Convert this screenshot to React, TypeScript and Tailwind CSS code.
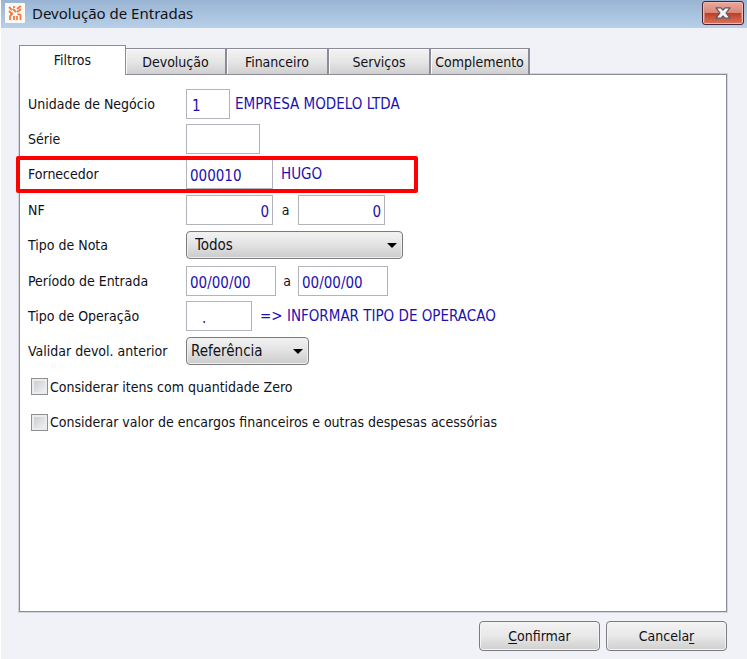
import React from 'react';

const tabs = [
  { name: "Filtros", width: "w-[107px]" },
  { name: "Devolução", width: "w-[101px]" },
  { name: "Financeiro", width: "w-[102px]" },
  { name: "Serviços", width: "w-[102px]" },
  { name: "Complemento", width: "w-[99px]" },
];

const inputClass = "h-[30px] border border-[#b2b3bd] bg-white px-[3px] pt-1 text-[15px] text-[#1c10b0] outline-none";
const comboClass = "h-7 w-full appearance-none rounded-[4px] border border-[#7c7c7c] bg-linear-to-b from-[#f3f3f3] via-[#e2e2e2] to-[#cbcbcb] pr-6 text-[15px] text-[#111118] shadow-[inset_0_0_0_1px_#f0f0f0] outline-none";
const buttonClass = "h-[30px] w-[121px] rounded-[4px] border border-[#7c7c80] bg-linear-to-b from-[#f3f3f3] from-0% via-[#e8e8e8] via-50% to-[#cfcfcf] text-center shadow-[inset_0_0_0_1px_#f4f4f4]";

const AppIcon = () => (
  <svg className="h-5 w-5" viewBox="0 0 20 20" aria-hidden="true">
    <rect width="20" height="20" rx="1" fill="#fff8f5" />
    <g stroke="#f47a3c" strokeWidth="1.8" fill="none">
      <path d="M4 4l3 3M4 8l3 3M9 3v2M8 6l3 3M12 6l4-3M12 9l4-3" />
      <path d="M5 17v-4l3-3M9 17v-4M12 17v-4M15.500 17v-5l-3-1" />
    </g>
  </svg>
);

const CloseIcon = () => (
  <svg className="h-3 w-4" viewBox="0 0 16 12" aria-hidden="true">
    <path
      d="M1 .8h5L8 3 10 .8h5L11 6l4 5.200h-5L8 9l-2 2.200H1L5 6z"
      fill="#f4f4f6"
      stroke="#5c5560"
      strokeWidth="1.200"
      strokeLinejoin="round"
    />
  </svg>
);

const Row = ({ label, id, children }: { label: string; id: string; children: React.ReactNode }) => (
  <div className="relative flex items-center pl-2">
    <label htmlFor={id} className="w-[158px] shrink-0 whitespace-nowrap">{label}</label>
    {children}
  </div>
);

const Combo = ({ id, width, pad, options }: { id: string; width: string; pad: string; options: string[] }) => (
  <div className={`relative ${width}`}>
    <select id={id} className={`${comboClass} ${pad}`}>
      {options.map((option) => (
        <option key={option}>{option}</option>
      ))}
    </select>
    <svg className="pointer-events-none absolute top-3 right-1.5 h-[5px] w-2.5" viewBox="0 0 10 5" aria-hidden="true">
      <path d="M0 0h10L5 5z" fill="#000" />
    </svg>
  </div>
);

const Check = ({ label }: { label: string }) => (
  <div className="flex items-center pl-[11px]">
    <label className="flex items-center gap-0.5 whitespace-nowrap">
      <input
        type="checkbox"
        className="h-[17px] w-[17px] shrink-0 appearance-none border border-[#8e8f8f] bg-linear-to-br from-[#c2c8cf] to-[#f6f6f6] shadow-[inset_0_0_0_2px_#ececec] checked:bg-[#4b6fa5]"
      />
      {label}
    </label>
  </div>
);

export default function App() {
  return (
    <div className="flex min-h-screen flex-col border-l border-white bg-[#f1f2f8] font-['DejaVu_Sans_Condensed','DejaVu_Sans',sans-serif] text-[14px] leading-4 text-[#111118]">
      <header className="flex h-7 items-start justify-between bg-linear-to-b from-[#99b4d2] to-[#b8d0e9] pr-[3px] pl-1">
        <div className="flex items-center gap-[7px] pt-[3px]">
          <AppIcon />
          <h1 className="font-['Noto_Sans','Open_Sans',sans-serif] text-[15px] leading-5">Devolução de Entradas</h1>
        </div>
        <button
          type="button"
          aria-label="Fechar"
          className="mt-px flex h-6 w-[42px] items-center justify-center rounded-[3px] border border-[#4a2430] bg-linear-to-b from-[#e9a99d] from-0% via-[#d98878] via-48% to-[#d4705a] shadow-[inset_0_0_0_1px_#efb9ad]"
        >
          <span className="flex h-5 w-9 items-center justify-center bg-linear-to-b from-transparent from-50% via-[#bd3c22] via-50% to-[#d4705a]">
            <CloseIcon />
          </span>
        </button>
      </header>

      <main className="flex flex-1 flex-col px-[18px] pt-[17px] pr-5 pb-2">
        <div role="tablist" className="relative flex items-end">
          {tabs.map((tab, i) => (
            <button
              key={tab.name}
              type="button"
              role="tab"
              aria-selected={i === 0}
              className={
                i === 0
                  ? `${tab.width} relative -mb-px h-[30px] border border-b-0 border-[#8b8c98] bg-white pb-0.5`
                  : `${tab.width} h-[26px] border-t border-r-2 border-[#8b8c98] bg-linear-to-b from-[#f3f3f3] via-[#e6e6e6] to-[#cfcfcf] whitespace-nowrap shadow-[inset_1px_1px_0_#fafafa]`
              }
            >
              {tab.name}
            </button>
          ))}
        </div>

        <section className="flex-1 border border-[#8b8c98] bg-white pt-[11px] shadow-[0_0_0_1px_#d3d4dc]">
          <form className="grid min-h-[354px] auto-rows-fr">
            <Row label="Unidade de Negócio" id="unidade">
              <input id="unidade" defaultValue="1" className={`${inputClass} w-11 indent-0.5`} />
              <span className="ml-[5px] text-[15px] text-[#1c10b0]">EMPRESA MODELO LTDA</span>
            </Row>
            <Row label="Série" id="serie">
              <input id="serie" className={`${inputClass} w-[74px]`} />
            </Row>
            <Row label="Fornecedor" id="fornecedor">
              <input id="fornecedor" defaultValue="000010" className={`${inputClass} w-[87px]`} />
              <span className="ml-2 text-[15px] text-[#1c10b0]">HUGO</span>
              <div className="pointer-events-none absolute inset-y-[-1px] -left-1 w-[402px] rounded-[2px] border-4 border-[#ff0000]" />
            </Row>
            <Row label="NF" id="nf">
              <input id="nf" defaultValue="0" className={`${inputClass} w-[87px] text-right`} />
              <span className="w-[25px] text-center">a</span>
              <input aria-label="NF final" defaultValue="0" className={`${inputClass} w-[87px] text-right`} />
            </Row>
            <Row label="Tipo de Nota" id="nota">
              <Combo id="nota" width="w-[217px]" pad="pl-2" options={["Todos"]} />
            </Row>
            <Row label="Período de Entrada" id="periodo">
              <input id="periodo" defaultValue="00/00/00" className={`${inputClass} w-[90px]`} />
              <span className="w-[22px] text-center">a</span>
              <input aria-label="Período final" defaultValue="00/00/00" className={`${inputClass} w-[90px]`} />
            </Row>
            <Row label="Tipo de Operação" id="operacao">
              <input id="operacao" defaultValue="." className={`${inputClass} w-[66px] indent-3`} />
              <span className="ml-2 text-[15px] text-[#1c10b0]">=&gt; INFORMAR TIPO DE OPERACAO</span>
            </Row>
            <Row label="Validar devol. anterior" id="validar">
              <Combo id="validar" width="w-[123px]" pad="pl-1" options={["Referência"]} />
            </Row>
            <Check label="Considerar itens com quantidade Zero" />
            <Check label="Considerar valor de encargos financeiros e outras despesas acessórias" />
          </form>
        </section>

        <footer className="flex justify-end gap-1.5 pt-[9px]">
          <button type="button" className={buttonClass}>
            <span className="underline underline-offset-2">C</span>onfirmar
          </button>
          <button type="button" className={buttonClass}>
            Cancela<span className="underline underline-offset-2">r</span>
          </button>
        </footer>
      </main>
    </div>
  );
}
